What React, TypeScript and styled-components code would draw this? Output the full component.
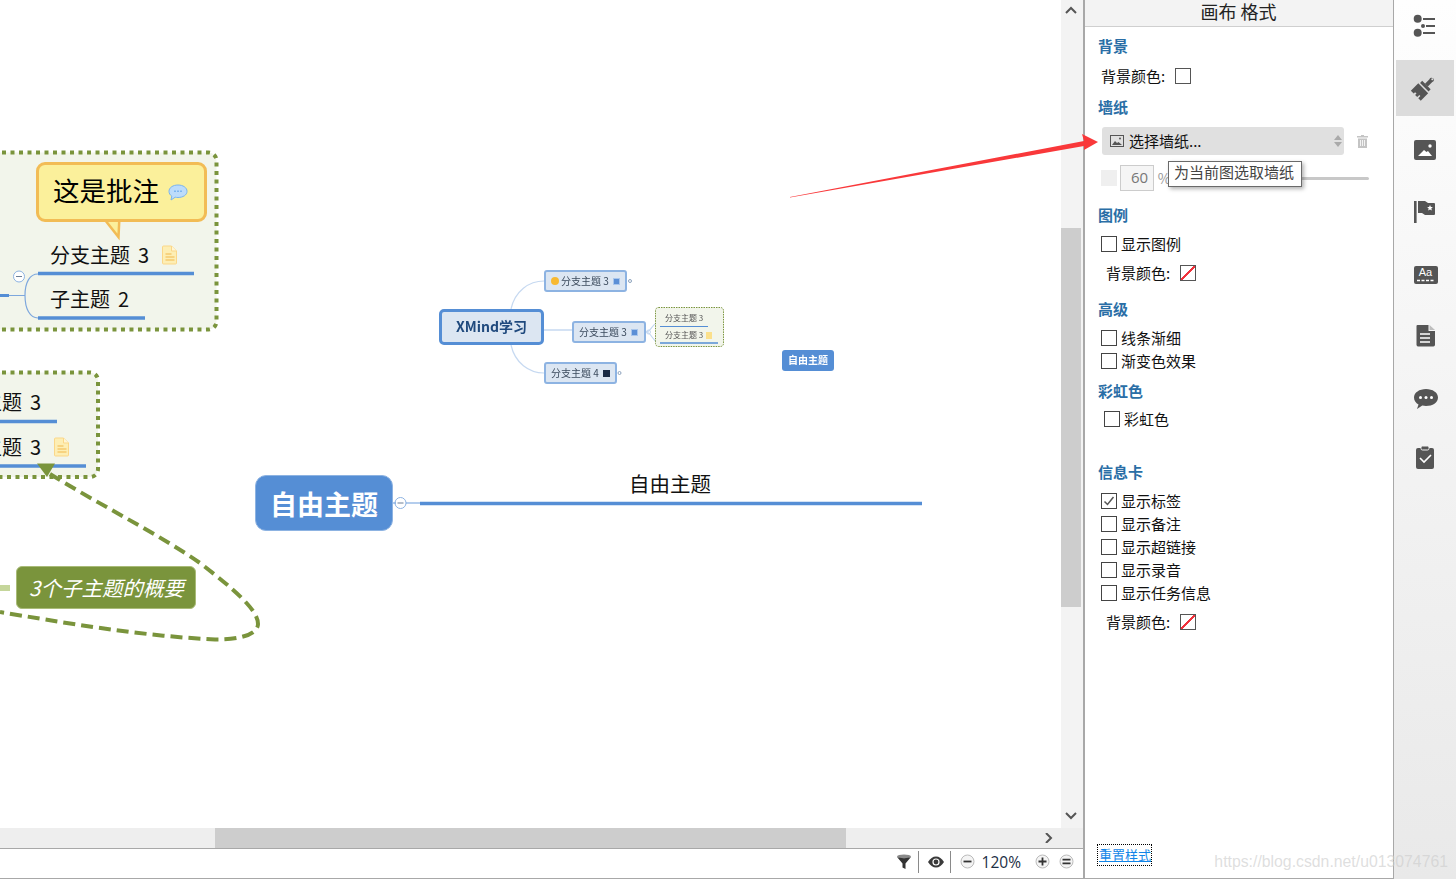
import React from "react";
import styled, { createGlobalStyle } from "styled-components";

const CJK = `"Noto Sans CJK SC", "Noto Sans", sans-serif`;
const BLUE = "#558ed5";
const OLIVE = "#7a943c";

const GlobalStyle = createGlobalStyle`
  html, body { margin: 0; padding: 0; background: #fff; overflow: hidden; }
  #root { width: 1456px; height: 879px; }
  * { box-sizing: border-box; }
`;

const Page = styled.div`
  position: relative;
  display: flex;
  width: 1456px;
  height: 879px;
  overflow: hidden;
  font-family: ${CJK};
  color: #111;
`;

/* ---------- left: canvas with scrollbars and status bar ---------- */

const Workspace = styled.main`
  display: flex;
  flex-direction: column;
  width: 1085px;
  border-right: 2px solid #a8a8a8;
  border-bottom: 1px solid #a8a8a8;
`;

const CanvasRow = styled.div`
  display: flex;
  flex: 1;
  min-height: 0;
`;

const Canvas = styled.div`
  position: relative;
  flex: 1;
  overflow: hidden;
  background: #fff;
`;

const VTrack = styled.div`
  display: flex;
  flex-direction: column;
  align-items: center;
  justify-content: space-between;
  width: 22px;
  padding: 6px 2px 7px 0;
  background: #f3f3f3;
`;

const VThumb = styled.div`
  width: 20px;
  height: 379px;
  margin-top: 212px;
  margin-bottom: auto;
  background: #cdcdcd;
`;

const HTrack = styled.div`
  display: flex;
  align-items: center;
  height: 21px;
  padding-left: 215px;
  background: #eeeeee;
  border-bottom: 1px solid #a8a8a8;
`;

const HThumb = styled.div`
  width: 631px;
  height: 20px;
  background: #cdcdcd;
`;

const HArrow = styled.div`
  display: flex;
  margin-left: 197px;
`;

const StatusBar = styled.footer`
  display: flex;
  align-items: center;
  justify-content: flex-end;
  height: 29px;
  padding: 0 9px 4px 0;
  background: #fff;
`;

const StatusIcon = styled.span<{ $ml?: number }>`
  display: flex;
  margin-left: ${(p) => p.$ml ?? 0}px;
`;

const StatusDivider = styled.span`
  width: 1px;
  height: 22px;
  margin: 0 9px 0 6px;
  background: #8a8a8a;
`;

const Zoom = styled.span`
  margin: 0 14px 0 7px;
  font-family: "Open Sans", sans-serif;
  font-size: 15.500px;
  color: #1d2f45;
`;

/* ---------- mind map nodes ---------- */

const MapLayer = styled.svg`
  position: absolute;
  left: 0;
  top: 0;
  width: 1061px;
  height: 828px;
`;

const Callout = styled.div`
  position: absolute;
  left: 36px;
  top: 162px;
  width: 171px;
  height: 60px;
  display: flex;
  align-items: center;
  padding-left: 14px;
  gap: 9px;
  background: #fbf09b;
  border: 3px solid #f2bc55;
  border-radius: 9px;
  color: #000;
`;

const CalloutText = styled.span`
  margin-top: -5px;
  font-size: 26.500px;
  line-height: 38px;
`;

const Label = styled.div<{ $x: number; $y: number; $size?: number }>`
  position: absolute;
  left: ${(p) => p.$x}px;
  top: ${(p) => p.$y}px;
  font-size: ${(p) => p.$size ?? 20}px;
  line-height: 28px;
  word-spacing: 3.500px;
  white-space: nowrap;
  color: #111;
`;

const NoteIcon = styled.svg<{ $x: number; $y: number }>`
  position: absolute;
  left: ${(p) => p.$x}px;
  top: ${(p) => p.$y}px;
`;

const Summary = styled.div`
  position: absolute;
  left: 16px;
  top: 566px;
  width: 180px;
  height: 43px;
  padding-left: 12px;
  background: ${OLIVE};
  border: 1px solid #a9bb78;
  border-radius: 6px;
  font-size: 20.500px;
  font-style: italic;
  line-height: 41px;
  color: #fff;
  white-space: nowrap;
`;

const FreeTopic = styled.div`
  position: absolute;
  left: 255px;
  top: 475px;
  width: 138px;
  height: 56px;
  display: flex;
  align-items: center;
  justify-content: center;
  background: ${BLUE};
  border: 1px solid #8db3e2;
  border-radius: 11px;
  font-size: 27px;
  font-weight: 700;
  color: #fff;
`;

/* wallpaper preview in the middle of the canvas */
const MiniNode = styled.div<{ $x: number; $y: number; $w: number; $h: number; $root?: boolean }>`
  position: absolute;
  left: ${(p) => p.$x}px;
  top: ${(p) => p.$y}px;
  width: ${(p) => p.$w}px;
  height: ${(p) => p.$h}px;
  display: flex;
  align-items: center;
  justify-content: ${(p) => (p.$root ? "center" : "flex-start")};
  padding: 0 0 2px ${(p) => (p.$root ? 0 : 5)}px;
  gap: 2px;
  background: #dce6f2;
  border: ${(p) => (p.$root ? `3px solid ${BLUE}` : "2px solid #8db3e2")};
  border-radius: ${(p) => (p.$root ? 5 : 3)}px;
  font-size: ${(p) => (p.$root ? 14 : 10)}px;
  font-weight: ${(p) => (p.$root ? 700 : 400)};
  color: ${(p) => (p.$root ? "#1f497d" : "#3b4a5c")};
  white-space: nowrap;
  filter: blur(0.5px);
`;

const MiniFree = styled.div`
  position: absolute;
  left: 782px;
  top: 350px;
  width: 52px;
  height: 21px;
  display: flex;
  align-items: center;
  justify-content: center;
  padding-bottom: 2px;
  background: ${BLUE};
  border-radius: 3px;
  font-size: 10px;
  font-weight: 700;
  color: #fff;
  filter: blur(0.5px);
`;

const MiniLabel = styled.div<{ $y: number }>`
  position: absolute;
  left: 665px;
  top: ${(p) => p.$y}px;
  font-size: 8px;
  line-height: 10px;
  color: #555;
  white-space: nowrap;
  filter: blur(0.4px);
`;

const MiniBadge = styled.span<{ $dark?: boolean }>`
  width: 7px;
  height: 7px;
  margin: 2px 0 0 2px;
  background: ${(p) => (p.$dark ? "#1a2b44" : "#5b8fd6")};
  border: 1px solid ${(p) => (p.$dark ? "#1a2b44" : "#a9c6ec")};
`;

const MiniSmile = styled.span`
  width: 8px;
  height: 8px;
  margin-top: 2px;
  border-radius: 50%;
  background: #f8b931;
`;

/* ---------- format panel ---------- */

const Panel = styled.aside`
  display: flex;
  flex-direction: column;
  width: 309px;
  background: #fff;
  border-right: 1px solid #a8a8a8;
  border-bottom: 1px solid #a8a8a8;
`;

const PanelTitle = styled.header`
  height: 27px;
  padding-right: 1px;
  background: #f3f3f3;
  border-bottom: 1px solid #cfcfcf;
  font-size: 18px;
  line-height: 22px;
  text-align: center;
  color: #222;
`;

const PanelBody = styled.div`
  position: relative;
  display: flex;
  flex-direction: column;
  flex: 1;
  padding: 0 24px 13px 13px;
`;

const Heading = styled.h3<{ $mt: number }>`
  margin: ${(p) => p.$mt}px 0 0;
  font-size: 15px;
  font-weight: 700;
  line-height: 20px;
  color: #2a6ea6;
`;

const Row = styled.label<{ $mt?: number; $indent?: number }>`
  display: flex;
  align-items: center;
  height: 23px;
  margin-top: ${(p) => p.$mt ?? 0}px;
  padding-left: ${(p) => p.$indent ?? 3}px;
  font-size: 15px;
  color: #111;
`;

const Check = styled.span`
  display: flex;
  align-items: center;
  justify-content: center;
  width: 16px;
  height: 16px;
  margin-right: 4px;
  background: #fff;
  border: 1px solid #444;
`;

const Swatch = styled.span<{ $none?: boolean }>`
  display: block;
  width: 16px;
  height: 16px;
  margin-left: 10px;
  border: 1px solid #555;
  background: ${(p) =>
    p.$none
      ? "linear-gradient(to bottom right, #fff calc(50% - 0.8px), #f0323c calc(50% - 0.8px), #f0323c calc(50% + 0.8px), #fff calc(50% + 0.8px))"
      : "#fff"};
`;

const SelectRow = styled.div`
  display: flex;
  align-items: center;
  margin-top: 10px;
  padding-left: 4px;
`;

const Select = styled.div`
  display: flex;
  align-items: center;
  width: 242px;
  height: 28px;
  padding: 0 1px 0 8px;
  background: #e0e0e0;
  border-radius: 3px;
  font-size: 15px;
`;

const SelectText = styled.span`
  flex: 1;
  margin: -2px 0 0 5px;
`;

const TrashSlot = styled.span`
  display: flex;
  margin-left: 13px;
`;

const SliderRow = styled.div`
  position: relative;
  display: flex;
  align-items: center;
  height: 30px;
  margin-top: 8px;
  padding-left: 3px;
`;

const GreySquare = styled.span`
  width: 16px;
  height: 16px;
  background: #efefef;
`;

const NumberBox = styled.span`
  width: 34px;
  height: 26px;
  margin-left: 3px;
  padding-left: 10px;
  background: #f5f5f5;
  border: 1px solid #ccc;
  font-family: "Open Sans", sans-serif;
  font-size: 15px;
  line-height: 22px;
  color: #777;
`;

const Percent = styled.span`
  margin-left: 4px;
  font-size: 14px;
  color: #999;
`;

const SliderTrack = styled.span`
  width: 199px;
  height: 3px;
  margin-left: 1px;
  background: #c8c8c8;
  border-radius: 2px;
`;

const Tooltip = styled.div`
  position: absolute;
  left: 70px;
  top: -2px;
  width: 134px;
  height: 26px;
  padding-left: 5px;
  background: #fff;
  border: 1px solid #6a6a6a;
  box-shadow: 2px 2px 4px rgba(0, 0, 0, 0.3);
  font-size: 15px;
  line-height: 20px;
  color: #444;
  white-space: nowrap;
`;

const ResetLink = styled.a`
  align-self: flex-start;
  margin-top: auto;
  padding: 0 0 0 1px;
  height: 20px;
  outline: 1px dotted #000;
  font-size: 13px;
  line-height: 19px;
  color: #1386e8;
  text-decoration: underline;
  white-space: nowrap;
`;

/* ---------- right icon rail ---------- */

const Rail = styled.nav`
  display: flex;
  flex-direction: column;
  gap: 6px;
  width: 62px;
  overflow: hidden;
  background: linear-gradient(to bottom, #fefefe 0%, #f3f3f3 50%, #e9e9e9 100%);
`;

const RailItem = styled.div<{ $active?: boolean }>`
  display: flex;
  flex: none;
  align-items: center;
  justify-content: center;
  height: 56px;
  margin: 0 2px;
  background: ${(p) => (p.$active ? "#dcdcdc" : "transparent")};
  &:first-child {
    margin-top: -2px;
  }
`;

const Overlay = styled.svg`
  position: absolute;
  left: 0;
  top: 0;
  width: 1456px;
  height: 879px;
  pointer-events: none;
`;

const Watermark = styled.div`
  position: absolute;
  right: 8px;
  bottom: 8px;
  font-family: "Liberation Sans", sans-serif;
  font-size: 15.800px;
  color: rgba(205, 205, 205, 0.65);
  pointer-events: none;
`;

/* ---------- drawings ---------- */

const Note = ({ x, y }: { x: number; y: number }) => (
  <NoteIcon $x={x} $y={y} width="16" height="20" viewBox="0 0 16 20">
    <path d="M1.500 1h8l5 5v12a1 1 0 0 1-1 1h-12a1 1 0 0 1-1-1V2a1 1 0 0 1 1-1z" fill="#fdeeb4" stroke="#fbd788" />
    <path d="M9.500 1v5h5" fill="#fff6d6" stroke="#fbd788" />
    <path d="M3.500 9h6M3.500 12h9M3.500 15h9" stroke="#f2b84d" strokeWidth="1.200" />
  </NoteIcon>
);

const Bubble = () => (
  <svg width="20" height="17" viewBox="0 0 20 17">
    <path d="M10 1c5 0 9 2.600 9 6.300s-4 6.200-9 6.200c-1 0-2-.1-2.800-.3L3 16l.8-3.900C2 11 1 9.300 1 7.300 1 3.600 5 1 10 1z" fill="#bcdcfb" stroke="#79b4f0" />
    <path d="M6.500 7.300h1M9.500 7.300h1M12.500 7.300h1" stroke="#3f8fe6" strokeWidth="1.400" />
  </svg>
);

const Chevron = ({ dir }: { dir: "up" | "down" | "right" }) => {
  const d = dir === "up" ? "M1 7l5-5 5 5" : dir === "down" ? "M1 2l5 5 5-5" : "M3 0l5 5-5 5";
  return (
    <svg width="12" height="10" viewBox="0 0 12 10">
      <path d={d} fill="none" stroke="#555" strokeWidth="2" />
    </svg>
  );
};

const CheckMark = () => (
  <svg width="12" height="12" viewBox="0 0 12 12">
    <path d="M1.500 6.500l3 3 6-7.500" fill="none" stroke="#555" strokeWidth="1.500" />
  </svg>
);

const Round = ({ kind }: { kind: "minus" | "plus" | "equal" }) => (
  <svg width="15" height="15" viewBox="0 0 15 15">
    <circle cx="7.500" cy="7.500" r="6.500" fill="#f4f4f4" stroke="#bbb" />
    {kind === "equal" ? (
      <path d="M3.500 5.700h8M3.500 9.300h8" stroke="#333" strokeWidth="1.800" />
    ) : (
      <path d={kind === "plus" ? "M3.500 7.500h8M7.500 3.500v8" : "M3.500 7.500h8"} stroke="#333" strokeWidth="1.800" />
    )}
  </svg>
);

const RailIcon = ({ children }: { children: React.ReactNode }) => (
  <svg width="30" height="30" viewBox="0 0 30 30" fill="#555">
    {children}
  </svg>
);

const railIcons: React.ReactNode[] = [
  <>
    <circle cx="7.700" cy="7.700" r="4" />
    <circle cx="13" cy="15" r="2" />
    <circle cx="7.700" cy="21.700" r="4" />
    <path d="M13 7h12v2H13zM16 14h9v2h-9zM13 21h12v2H13z" />
  </>,
  <g transform="translate(0 -1.500) rotate(45 15 15)">
    <path d="M13 4.500a2.500 2.500 0 0 1 4 0c.4.800.3 1.500 0 2.200V13h-4V6.700c-.3-.7-.4-1.400 0-2.200z" />
    <rect x="9" y="13" width="12" height="3" />
    <path d="M8 17.500h14V28h-3.500v-3H17v3h-3v-2h-2v2H8z" />
    <circle cx="15" cy="4.700" r="1" fill="#dcdcdc" />
  </g>,
  <>
    <rect x="4" y="5" width="22" height="20" rx="2" />
    <path d="M8 21l6-6 2.500 2 1.500-1 4 5z" fill="#fff" />
    <circle cx="20" cy="11" r="1.700" fill="#fff" />
  </>,
  <>
    <rect x="4" y="4" width="2.600" height="22" />
    <path d="M8 4h7l3 2h6a1 1 0 0 1 1 1v10a1 1 0 0 1-1 1H15l-3-2H8z" />
    <path d="M20 8l.9 2h2l-1.600 1.400.6 2.100-1.900-1.100-1.900 1.100.6-2.100L17.100 10h2z" fill="#fff" />
  </>,
  <>
    <rect x="4" y="7" width="24" height="18" rx="2" />
    <text x="15.500" y="17" textAnchor="middle" fill="#fff" fontFamily="Liberation Sans, sans-serif" fontSize="11">Aa</text>
    <path d="M7 21.500h18" stroke="#fff" strokeWidth="1.700" strokeDasharray="3 1.500" />
  </>,
  <>
    <path d="M7.500 4h11v6h6.500v14a2 2 0 0 1-1.500 1.500h-15A2 2 0 0 1 6.500 24V5a1 1 0 0 1 1-1z" />
    <path d="M19.500 4l5.500 5h-5.500z" fill="#bdbdbd" />
    <path d="M10 13h10M10 17h10M10 21h10" stroke="#fff" strokeWidth="1.300" />
  </>,
  <>
    <path d="M16 6c6.600 0 12 3.500 12 8.500S22.600 23 16 23c-1.300 0-2.500-.1-3.700-.4L7 26l1.500-4.500C5.800 20 4 17.500 4 14.500 4 9.500 9.400 6 16 6z" />
    <circle cx="10.500" cy="14.500" r="1.500" fill="#fff" />
    <circle cx="16" cy="14.500" r="1.500" fill="#fff" />
    <circle cx="21.500" cy="14.500" r="1.500" fill="#fff" />
  </>,
  <>
    <rect x="6" y="3" width="18" height="21" rx="2" />
    <rect x="11" y="1" width="8" height="4" rx="1.500" stroke="#f0f0f0" strokeWidth="1" />
    <path d="M10 13l4 4 7-7" fill="none" stroke="#fff" strokeWidth="1.600" />
  </>,
];

const App = () => (
  <>
    <GlobalStyle />
    <Page>
      <Workspace>
        <CanvasRow>
          <Canvas>
            <MapLayer viewBox="0 0 1061 828">
              {/* boundaries */}
              <rect x="-40" y="152.500" width="256.500" height="177" rx="8" fill="#f2f5eb" stroke={OLIVE} strokeWidth="4" strokeDasharray="4 4.500" />
              <rect x="-40" y="372.500" width="138" height="104.500" rx="8" fill="#f2f5eb" stroke={OLIVE} strokeWidth="4" strokeDasharray="4 4.500" />

              {/* callout tail */}
              <path d="M105 220l13.500 17 .8-17" fill="#fbf09b" stroke="#f2bc55" strokeWidth="2.500" />

              {/* branches in the first boundary */}
              <path d="M0 295.500h9" stroke={BLUE} strokeWidth="3" />
              <path d="M9 295.500h16M38 274c-8 0-13 8-13 21.500S30 318 38 318" fill="none" stroke="#7da7dd" strokeWidth="1.200" />
              <path d="M38 273.500h156M38 318h107" stroke={BLUE} strokeWidth="3.500" />
              <circle cx="19" cy="276.500" r="5.500" fill="#fff" stroke="#8db3e2" />
              <path d="M16 276.500h6" stroke="#6d7f96" />

              {/* second boundary */}
              <path d="M0 421.500h57M0 466h86" stroke={BLUE} strokeWidth="3.500" />

              {/* summary and relation line, drawn from the arrow head so a dash touches it */}
              <path d="M0 588h10" stroke="#c5d69b" strokeWidth="6" />
              <path
                d="M50 474C100 505 160 535 200 563C235 590 258 610 258 624C258 634 240 640 215 639.500C140 636 60 622 0 612"
                fill="none"
                stroke={OLIVE}
                strokeWidth="4"
                strokeDasharray="12 6"
              />
              <path d="M37 463.500h18l-8 13.500z" fill={OLIVE} />

              {/* free topic line */}
              <circle cx="400.500" cy="503" r="5.500" fill="#fff" stroke="#8db3e2" />
              <path d="M397.500 503h6" stroke="#6d7f96" />
              <path d="M393 503h3M406 503h14" stroke="#6a9cdc" strokeWidth="1.200" />
              <path d="M420 503.500h502" stroke={BLUE} strokeWidth="3.500" />

              {/* preview connectors */}
              <g fill="none" stroke="#c6d9f1" strokeWidth="1.200">
                <path d="M511 309c4-18 18-28 33-28" />
                <path d="M544 330h28" strokeWidth="1.500" />
                <path d="M511 345c4 18 18 28 33 28" />
                <path d="M646 332c5 0 6-8 11-9M646 332c5 0 6 8 11 10" />
              </g>
              <circle cx="630" cy="281" r="1.500" fill="none" stroke="#8da3bd" />
              <circle cx="619.500" cy="373" r="1.500" fill="none" stroke="#8da3bd" />
              <circle cx="648.500" cy="332" r="2" fill="none" stroke="#c6d9f1" />
              <rect x="655.500" y="307.500" width="68" height="39" rx="3" fill="#f2f5eb" stroke={OLIVE} strokeWidth="1" strokeDasharray="1.500 1" />
              <path d="M660 326.500h48" stroke={BLUE} strokeWidth="1" />
              <path d="M660 343h58" stroke={BLUE} strokeWidth="1.500" />
              <rect x="706" y="332" width="6" height="7" fill="#fbe08c" />
            </MapLayer>

            <Callout>
              <CalloutText>这是批注</CalloutText>
              <Bubble />
            </Callout>
            <Label $x={50} $y={241}>分支主题 3</Label>
            <Note x={162} y={245} />
            <Label $x={50} $y={285}>子主题 2</Label>
            <Label $x={-58} $y={388}>分支主题 3</Label>
            <Label $x={-58} $y={433}>分支主题 3</Label>
            <Note x={54} y={437} />
            <Summary>3个子主题的概要</Summary>
            <FreeTopic>自由主题</FreeTopic>
            <Label $x={629} $y={469} $size={20.500}>自由主题</Label>

            <MiniNode $root $x={439} $y={309} $w={105} $h={36}>XMind学习</MiniNode>
            <MiniNode $x={544} $y={270} $w={83} $h={22}>
              <MiniSmile />
              分支主题 3
              <MiniBadge />
            </MiniNode>
            <MiniNode $x={572} $y={321} $w={74} $h={22}>
              分支主题 3
              <MiniBadge />
            </MiniNode>
            <MiniNode $x={544} $y={362} $w={73} $h={22}>
              分支主题 4
              <MiniBadge $dark />
            </MiniNode>
            <MiniLabel $y={313}>分支主题 3</MiniLabel>
            <MiniLabel $y={330}>分支主题 3</MiniLabel>
            <MiniFree>自由主题</MiniFree>
          </Canvas>
          <VTrack>
            <Chevron dir="up" />
            <VThumb />
            <Chevron dir="down" />
          </VTrack>
        </CanvasRow>
        <HTrack>
          <HThumb />
          <HArrow>
            <Chevron dir="right" />
          </HArrow>
        </HTrack>
        <StatusBar>
          <StatusIcon>
            <svg width="16" height="16" viewBox="0 0 16 16">
              <ellipse cx="8" cy="2.500" rx="7" ry="2" fill="#8a8a8a" />
              <path d="M1 3c2 1.500 12 1.500 14 0l-5.500 6.500V15l-3-1.500v-4z" fill="#333" />
            </svg>
          </StatusIcon>
          <StatusDivider />
          <StatusIcon>
            <svg width="16" height="12" viewBox="0 0 16 12">
              <path d="M0 6c2-3.500 5-5.500 8-5.500S14 2.500 16 6c-2 3.500-5 5.500-8 5.500S2 9.500 0 6z" fill="#3a3a3a" />
              <circle cx="8" cy="6" r="3.600" fill="#fff" />
              <circle cx="8" cy="6" r="2.400" fill="#3a3a3a" />
            </svg>
          </StatusIcon>
          <StatusDivider />
          <StatusIcon>
            <Round kind="minus" />
          </StatusIcon>
          <Zoom>120%</Zoom>
          <StatusIcon>
            <Round kind="plus" />
          </StatusIcon>
          <StatusIcon $ml={9}>
            <Round kind="equal" />
          </StatusIcon>
        </StatusBar>
      </Workspace>

      <Panel>
        <PanelTitle>画布 格式</PanelTitle>
        <PanelBody>
          <Heading $mt={9}>背景</Heading>
          <Row $mt={8}>
            背景颜色:
            <Swatch />
          </Row>

          <Heading $mt={10}>墙纸</Heading>
          <SelectRow>
            <Select>
              <svg width="14" height="12" viewBox="0 0 14 12">
                <rect x="0.500" y="0.500" width="13" height="11" fill="none" stroke="#555" />
                <path d="M2 10l3-4 2 2 1.500-1L12 10z" fill="#555" />
                <circle cx="10" cy="3.500" r="1" fill="#555" />
              </svg>
              <SelectText>选择墙纸...</SelectText>
              <svg width="10" height="14" viewBox="0 0 10 14">
                <path d="M5 1l4 5H1zM5 13l4-5H1z" fill="#aaa" />
              </svg>
            </Select>
            <TrashSlot>
              <svg width="11" height="13" viewBox="0 0 11 13">
                <path d="M4 0h3v1h4v1.500H0V1h4zM1 3.500h9V13H1z" fill="#c4c4c4" />
                <path d="M3.500 5v6M5.500 5v6M7.500 5v6" stroke="#fff" strokeWidth="0.800" />
              </svg>
            </TrashSlot>
          </SelectRow>
          <SliderRow>
            <GreySquare />
            <NumberBox>60</NumberBox>
            <Percent>%</Percent>
            <SliderTrack />
            <Tooltip>为当前图选取墙纸</Tooltip>
          </SliderRow>

          <Heading $mt={12}>图例</Heading>
          <Row $mt={7}>
            <Check />
            显示图例
          </Row>
          <Row $mt={6} $indent={8}>
            背景颜色:
            <Swatch $none />
          </Row>

          <Heading $mt={15}>高级</Heading>
          <Row $mt={7}>
            <Check />
            线条渐细
          </Row>
          <Row>
            <Check />
            渐变色效果
          </Row>

          <Heading $mt={9}>彩虹色</Heading>
          <Row $mt={6} $indent={6}>
            <Check />
            彩虹色
          </Row>

          <Heading $mt={32}>信息卡</Heading>
          <Row $mt={7}>
            <Check>
              <CheckMark />
            </Check>
            显示标签
          </Row>
          <Row>
            <Check />
            显示备注
          </Row>
          <Row>
            <Check />
            显示超链接
          </Row>
          <Row>
            <Check />
            显示录音
          </Row>
          <Row>
            <Check />
            显示任务信息
          </Row>
          <Row $mt={6} $indent={8}>
            背景颜色:
            <Swatch $none />
          </Row>

          <ResetLink>重置样式</ResetLink>
        </PanelBody>
      </Panel>

      <Rail>
        {railIcons.map((icon, index) => (
          <RailItem key={index} $active={index === 1}>
            <RailIcon>{icon}</RailIcon>
          </RailItem>
        ))}
      </Rail>

      <Watermark>https://blog.csdn.net/u013074761</Watermark>
      <Overlay viewBox="0 0 1456 879">
        <path d="M790 197L1084 141l-2-7 16 8-14 8v-4L790 197.500z" fill="#f9383a" />
      </Overlay>
    </Page>
  </>
);

export default App;
